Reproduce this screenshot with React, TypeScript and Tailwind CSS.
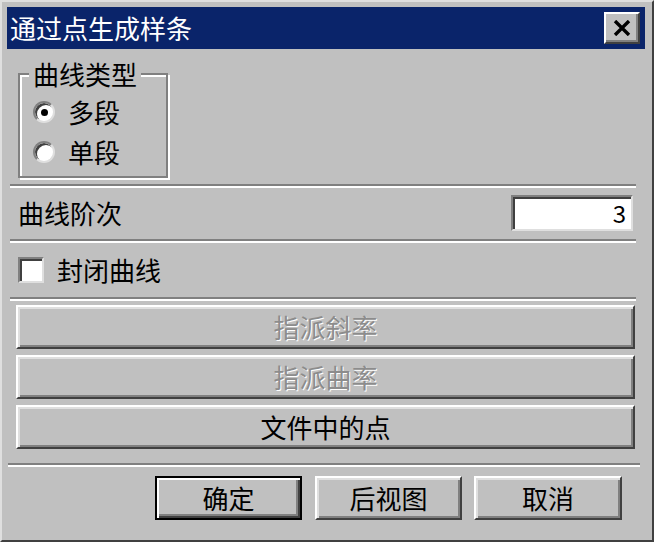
const font = { fontFamily: '"Noto Sans CJK SC", "Liberation Sans", sans-serif' };

function Etched({ className = '' }: { className?: string }) {
  return <div className={`h-[4px] border-t-2 border-b-2 border-t-[#808080] border-b-white ${className}`} />;
}

function Btn({
  label,
  disabled,
  isDefault,
  className = '',
}: {
  label: string;
  disabled?: boolean;
  isDefault?: boolean;
  className?: string;
}) {
  const frame = isDefault
    ? 'border-2 border-black shadow-[inset_2px_2px_0_#ffffff,inset_-2px_-2px_0_#404040,inset_-4px_-4px_0_#808080]'
    : 'border-2 border-t-white border-l-white border-r-[#404040] border-b-[#404040] shadow-[inset_2px_2px_0_#dfdfdf,inset_-2px_-2px_0_#808080]';
  return (
    <div
      className={`h-[44px] flex items-center justify-center bg-[#c0c0c0] text-[26px] leading-none ${frame} ${
        disabled ? 'text-[#8c8c8c] [text-shadow:1px_1px_0_#ffffff]' : 'text-black'
      } ${className}`}
    >
      {label}
    </div>
  );
}

function Radio({ checked, label }: { checked?: boolean; label: string }) {
  return (
    <div className="h-[40px] flex items-center">
      <div className="w-[22px] h-[22px] rounded-full bg-white border-2 border-t-[#808080] border-l-[#808080] border-r-[#dfdfdf] border-b-[#dfdfdf] shadow-[inset_2px_2px_0_#404040] flex items-center justify-center">
        {checked && <div className="w-[7px] h-[7px] rounded-full bg-black" />}
      </div>
      <span className="ml-[13px] text-[26px] leading-none">{label}</span>
    </div>
  );
}

export default function App() {
  return (
    <div
      style={font}
      className="w-[654px] h-[542px] bg-[#c0c0c0] text-black border-2 border-t-[#dfdfdf] border-l-[#dfdfdf] border-r-[#404040] border-b-[#404040] pt-[5px] pl-[5px] pr-[7px] flex flex-col"
    >
      <div className="h-[42px] bg-[#0a246a] flex items-center justify-between pl-[3px] pr-[5px]">
        <span className="text-white text-[26px] leading-none">通过点生成样条</span>
        <div className="w-[36px] h-[32px] bg-[#c0c0c0] border-2 border-t-white border-l-white border-r-[#404040] border-b-[#404040] shadow-[inset_-2px_-2px_0_#808080] flex items-center justify-center">
          <svg width="18" height="16" viewBox="0 0 18 16">
            <path d="M2 1 L16 15 M16 1 L2 15" stroke="#000" strokeWidth="3.4" />
          </svg>
        </div>
      </div>

      <fieldset className="ml-[11px] mt-[12px] w-[150px] h-[117px] border-2 border-[#808080] shadow-[inset_2px_2px_0_#ffffff,2px_2px_0_#ffffff] pl-[13px] pt-[5px]">
        <legend className="-ml-[4px] px-[4px] bg-[#c0c0c0] text-[26px] leading-[26px]">曲线类型</legend>
        <Radio checked label="多段" />
        <Radio label="单段" />
      </fieldset>

      <Etched className="mt-[6px] ml-[3px] w-[626px]" />

      <div className="mt-[7px] h-[36px] flex items-center justify-between pl-[11px] pr-[12px]">
        <span className="text-[26px] leading-none">曲线阶次</span>
        <div className="w-[122px] h-[36px] bg-white border-2 border-t-[#808080] border-l-[#808080] border-r-[#dfdfdf] border-b-[#dfdfdf] shadow-[inset_2px_2px_0_#404040] flex items-center justify-end pr-[5px] text-[24px] leading-none">
          3
        </div>
      </div>

      <Etched className="mt-[8px] ml-[3px] w-[626px]" />

      <div className="mt-[14px] h-[26px] flex items-center pl-[11px]">
        <div className="w-[26px] h-[26px] bg-white border-2 border-t-[#808080] border-l-[#808080] border-r-[#dfdfdf] border-b-[#dfdfdf] shadow-[inset_2px_2px_0_#404040]" />
        <span className="ml-[13px] text-[26px] leading-none">封闭曲线</span>
      </div>

      <Etched className="mt-[14px] ml-[3px] w-[626px]" />

      <div className="mt-[4px] ml-[9px] w-[619px] flex flex-col gap-[6px]">
        <Btn label="指派斜率" disabled />
        <Btn label="指派曲率" disabled />
        <Btn label="文件中的点" />
      </div>

      <Etched className="mt-[14px] ml-[1px] w-[632px]" />

      <div className="mt-[9px] ml-[148px] flex">
        <Btn label="确定" isDefault className="w-[147px]" />
        <Btn label="后视图" className="w-[147px] ml-[13px]" />
        <Btn label="取消" className="w-[148px] ml-[12px]" />
      </div>
    </div>
  );
}
